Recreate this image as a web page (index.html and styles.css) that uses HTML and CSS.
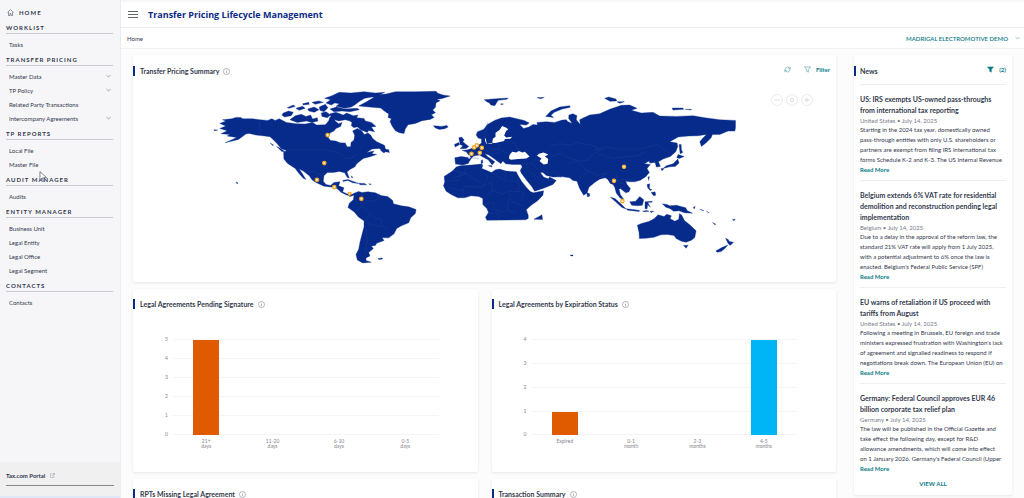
FILE: index.html
```html
<!DOCTYPE html>
<html lang="en">
<head>
    <meta charset="UTF-8">
    <meta name="viewport" content="width=device-width, initial-scale=1.0">
    <title>Transfer Pricing Lifecycle Management</title>
    <link rel="stylesheet" href="styles.css">
</head>
<body>
    <svg class="defs" aria-hidden="true">
        <symbol id="info" viewBox="0 0 16 16"><circle cx="8" cy="8" r="7"/><path d="M8 7v5M8 4v1.500"/></symbol>
        <symbol id="chevron" viewBox="0 0 12 8"><path d="M1 1.500l5 5 5-5"/></symbol>
        <symbol id="funnel" viewBox="0 0 16 16"><path d="M1 2h14L10 8v6l-4-2V8z"/></symbol>
    </svg>
    <div class="app">
        <aside class="sidebar">
            <nav>
                <a href="#" class="home">
                    <svg viewBox="0 0 14 14"><path d="M1 7l6-6 6 6M3 6v7h3V9h2v4h3V6"/></svg>
                    HOME
                </a>
                <h2>WORKLIST</h2>
                <ul>
                    <li><a href="#">Tasks</a></li>
                </ul>
                <h2>TRANSFER PRICING</h2>
                <ul>
                    <li><a href="#">Master Data</a><svg class="chevron"><use href="#chevron"/></svg></li>
                    <li><a href="#">TP Policy</a><svg class="chevron"><use href="#chevron"/></svg></li>
                    <li><a href="#">Related Party Transactions</a></li>
                    <li><a href="#">Intercompany Agreements</a><svg class="chevron"><use href="#chevron"/></svg></li>
                </ul>
                <h2>TP REPORTS</h2>
                <ul>
                    <li><a href="#">Local File</a></li>
                    <li><a href="#">Master File</a></li>
                </ul>
                <h2>AUDIT MANAGER</h2>
                <ul>
                    <li><a href="#">Audits</a></li>
                </ul>
                <h2>ENTITY MANAGER</h2>
                <ul>
                    <li><a href="#">Business Unit</a></li>
                    <li><a href="#">Legal Entity</a></li>
                    <li><a href="#">Legal Office</a></li>
                    <li><a href="#">Legal Segment</a></li>
                </ul>
                <h2>CONTACTS</h2>
                <ul>
                    <li><a href="#">Contacts</a></li>
                </ul>
            </nav>
            <div class="portal">
                <a href="#">Tax.com Portal
                    <svg viewBox="0 0 12 12"><path d="M6 2H1v9h8V6M5 7l6-6M7 1h4v4"/></svg>
                </a>
            </div>
        </aside>

        <div class="page">
            <header class="topbar">
                <button class="menu" aria-label="Menu"><span></span><span></span><span></span></button>
                <h1>Transfer Pricing Lifecycle Management</h1>
            </header>
            <div class="crumbs">
                <a href="#">Home</a>
                <button class="company">MADRIGAL ELECTROMOTIVE DEMO <svg class="chevron"><use href="#chevron"/></svg></button>
            </div>

            <main class="content">
                <div class="dashboard">
                    <section class="card summary">
                        <div class="card-head">
                            <h3>Transfer Pricing Summary</h3>
                            <svg class="info"><use href="#info"/></svg>
                            <div class="tools">
                                <button aria-label="Refresh"><svg viewBox="0 0 16 16"><path d="M2 9a6 6 0 0 1 10-5l2 2M14 2v4h-4M14 7a6 6 0 0 1-10 5l-2-2M2 14v-4h4"/></svg></button>
                                <button class="filter"><svg><use href="#funnel"/></svg>Filter</button>
                            </div>
                        </div>
                        <div class="map">
                            <svg class="world" viewBox="-198 0 2106 555">
                                <g class="land">
                                    <!-- North America -->
                                    <path d="M62 115L80 108 70 104 98 101 110 97 125 97 130 101 160 101 182 104 205 106 218 101 228 106 240 101 262 112 290 116 318 117 340 112 352 120 378 119 388 108 392 96 402 98 408 108 418 116 428 112 424 124 410 130 404 138 392 144 387 158 394 166 410 168 422 173 438 174 443 185 454 185 455 172 464 165 466 150 460 138 474 130 486 136 495 148 506 144 514 150 520 160 532 170 550 178 556 184 540 190 518 192 502 202 524 198 518 206 532 208 512 215 492 220 472 236 467 245 452 253 443 261 450 279 444 277 436 263 420 259 402 262 384 262 374 272 372 288 380 298 394 301 404 292 422 290 418 302 434 308 430 320 442 326 462 328 455 333 440 329 425 321 414 311 400 306 374 303 350 292 338 284 330 272 312 258 300 252 308 264 320 283 312 279 298 264 288 250 265 235 254 222 253 202 262 196 246 191 234 176 220 162 212 155 190 152 170 150 150 145 140 147 118 163 78 173 100 163 112 157 84 153 92 148 66 146 84 137 62 130 80 123z"/>
                                    <path d="M213 174l10 6-3 1zM232 184l8 4 18 12-10-1z"/>
                                    <path d="M458 112l12-8 10 8-2 12-14 4-8-6z"/>
                                    <path d="M540 188l10-10 6 4 2 10 10 2 2 8-12-2-4 4-8-6z"/>
                                    <!-- Arctic islands -->
                                    <path d="M252 84l16-6 14 4-6 10-20 4-8-6zM272 104l16-12 18-4 14 6 14-4 6 12 14-4 2 10-18 4-16-4-14 2-14 2zM264 68l18-8 6 4-18 6zM290 70l20-6 8 6-18 6zM310 56l18-4 2 6-18 2zM325 72l20-6 14 8-14 8-16-4zM338 52l20-4 14 4-24 6zM360 66l18-8 8 10-12 12-12-4zM366 84l14-4 14 10-10 8-16-4z"/>
                                    <path d="M392 72l20-6 24 6 38-2 6 4-28 6-24-2-24 2zM380 54l14-10-18-4 22-8 22-10 34 2 40-4 34 4 28-2-24 12-36 6-14 8-16 12-10 6-20 4-26-6 10-8-14-2-10 6z"/>
                                    <path d="M392 86l18-4 22 8 10-6 20 8 14-2-4 8 22 2 4 8 18 4 14 12-14 2 10 14-18-4-4 6-20-8-16-14-16-12-14-4-20 4-22-8z"/>
                                    <!-- Greenland and Iceland -->
                                    <path d="M478 63l22-12 24-14-14-6 50-4 28-7 60 0 62-1 4 5 16 6 22 3-26 8-14 2 10 4-12 6-2 14-8 8 8 8-12 6 8 8-12 6-24 4-20 8-22 4-8 12-4 14-14-2-12-6-10-14-6-14 4-8-10-4 2-10-12-8-12-10-26-2z"/>
                                    <path d="M702 122l12 1 12 1 16-3 4 5-10 5-16 2-12-4z"/>
                                    <!-- Caribbean -->
                                    <path d="M430 286l16-3 22 8 10 4-18-2-14-7-14 3zM478 294l18 1 6 4-20 0zM508 296l8 1-3 2zM456 272l4 4-2 3z"/>
                                    <!-- South America -->
                                    <path d="M450 334L464 324 478 319 488 322 506 320 528 323 545 331 565 334 580 346 582 356 606 362 628 365 650 373 648 385 634 398 628 413 606 422 592 430 584 446 568 458 548 458 554 466 532 474 528 481 516 482 522 490 508 502 512 512 500 518 500 526 516 531 490 533 474 524 470 508 478 492 482 470 488 448 494 425 494 407 478 396 464 380 446 367 450 354 462 344 464 330z"/>
                                    <path d="M536 520l12-2 2 3-12 2zM110 291l5 1 1 4-3-1zM44 134l12 1-10 2z"/>
                                </g>
                                <g class="land" transform="translate(600 0)">
                                    <!-- Europe and Asia -->
                                    <path d="M166 218L185 214 205 217 208 210 200 200 188 196 205 194 222 188 238 180 246 174 246 162 236 159 230 150 234 140 252 133 264 118 285 106 305 99 330 96 352 101 374 106 389 114 380 120 360 118 372 130 388 126 400 118 414 120 412 112 440 110 465 112 488 105 500 104 505 110 518 115 507 100 508 90 520 86 532 92 530 104 542 118 540 104 552 98 570 90 600 86 630 73 665 61 690 60 712 70 695 76 725 84 760 82 780 93 830 94 880 92 915 98 960 104 1007 106 1007 128 1005 138 985 138 960 148 938 148 934 158 920 172 905 184 900 170 910 158 920 148 895 152 865 153 835 156 810 170 832 174 834 184 828 200 812 214 790 222 776 230 782 244 770 246 766 232 750 234 748 228 734 236 752 238 742 250 749 262 738 275 722 285 705 290 690 290 678 288 682 298 692 310 688 320 678 323 662 310 658 312 662 328 672 342 662 339 650 324 645 306 640 298 632 295 624 282 616 278 600 282 585 292 568 306 562 324 552 330 540 310 532 288 520 286 510 278 490 275 460 276 440 271 430 262 422 262 432 276 446 281 450 276 470 286 460 298 430 310 405 318 397 305 380 284 365 264 362 256 368 245 364 238 340 238 318 236 310 228 304 236 296 230 280 218 268 210 256 205 264 214 286 230 278 240 266 224 250 216 240 210 222 213 214 222 206 235 190 240 168 237z"/>
                                    <!-- Africa -->
                                    <path d="M160 257L170 246 182 242 215 240 245 237 250 240 247 250 262 256 276 262 288 254 300 252 320 258 350 260 356 272 366 288 380 306 392 319 402 323 432 317 430 330 415 346 395 360 380 374 386 390 386 400 378 404 262 405 258 396 267 382 262 370 250 358 250 340 238 334 215 332 195 338 175 338 155 328 140 318 132 302 136 290 134 274z"/>
                                    <path d="M403 402l14-7 10-6 2 14zM178 158l8-2 8 8-4 6 10 8 8 6-8 6-18 1 8-9-8-4zM165 178l12-6 4 6-14 8zM245 226l4-2 1 10-5 2zM266 242l10-1 2 5zM512 509h8v3h-6z"/>
                                    <path d="M254 44l24-2 48-3-4 4-26 3-4 6-6 10-12-2-4-6-8-4zM304 56l8 1-8 2zM412 38l22-1-10 4zM438 94l16-16 26-12 30-4 2 5-24 5-24 10-10 9 8 6z"/>
                                    <path d="M615 40l12-4 22 6 2 6-20 1zM652 50l22 0-14 5zM817 69l32 0 3 4-32 2zM856 73l18 0 1 2zM838 178l6 0 1 16 4 8-8 4z"/>
                                    <!-- Pacific islands -->
                                    <path d="M835 208l18 6-14 6-8-2zM834 222l4 12-12 10-16 1-20 5 10-8 20-6zM784 250l7 0-1 5-4 1zM745 276l4-2-2 12zM562 323l8 3 0 7-7 2zM742 298l8-2-1 14 8 4-6 2-7-8zM754 322l12-2 2 10-6 2z"/>
                                    <path d="M632 336l14 4 20 18 14 14-14-6-18-16zM680 371l20 2 20 3-2 3-34-4zM690 350l18-2 12-14 12 10-4 16-14 2-18-2zM736 350l22-2-2 3-12 1 8 14-8-7-2 12h-6zM788 356l14 2 8 4 20-2 28 8 4 8 16 8-24-1-16-6-16 1-12-8-12-4zM728 378l12-2 8 2-12 2zM752 378l10 0-8 5zM880 368l6-5-2 8z"/>
                                    <path d="M900 372l12 4-2 1zM920 378l8 5-3-1zM938 412l10 5-3 2zM998 404l8-3-4 6z"/>
                                    <!-- Australia and New Zealand -->
                                    <path d="M713 420l12-5 22-6 16-8 12-12 18 5 8-7 14 5-4 8 14 8 12-6 2-17 7 5 8 16 16 13 19 18-4 20-10 8-16 6-14-3-16-8-6-9-20-3-20 1-20 7-24 3-20 1-1-18zM851 481l14-1-6 9zM977 459l8 4 4 6 12 2-10 10-6-6zM984 479l-8 10-12 10-12 2-4-4 18-10z"/>
                                </g>
                                <g class="sea" transform="translate(600 0)">
                                    <path d="M308 123l-8 12-12 8 0 12-8 6-2 14-18 1-4-12 2-6 4 18 10-2 16 0 26-6 2-6 16-1 6-6-18 2-6-6 6-14 6-4-4-4z"/>
                                    <path d="M330 210l8-10 12 2 8-4 10 4 8-2 14 14-10 6-24 2-22 2-6-4zM418 206l14-4 14 6-10 6 10 8-2 14-12 2-12-10 6-8-14-8zM204 212l6-2 4 8-6 4z"/>
                                </g>
                                <g class="borders">
                                    <path d="M182 104v47M262 195h120l28 6 18 6 8 14 20-2 20-12M316 258l30 2 20 12M488 325l4 18 22 6 24-8M470 376l20-12 22 20-12 18 8 14M512 384l14 16 20 4 2 16 18 14M508 416l22 6 20 4M500 424l4 40-6 40M536 342l4-18"/>
                                    <g transform="translate(600 0)">
                                        <path d="M160 256l40 10-38 12M200 240l-2 24 46 32M244 238l-2 20 20 10 2 14M318 258v30h44M276 262l42 26M262 284l-16 22-50-2-6 12M150 308l40 8 2 20M140 288l36-2 10-20M246 306l30-16 2 26M278 316l-22 20M278 316l30 10 20-8 32 2M328 340l-6 34 24 10M250 354h32l4 20 30 6M352 286l10 20-10 18M328 322l10 28 34 12M372 322l-6 24M264 384h34v20"/>
                                        <path d="M264 112l-10 50M330 100l-2 38M254 176l20 18 26-2 16 10M300 176l-4 20M316 168l30 6 6 18 20 8M208 218l30 2M258 196l16 12 24-6M368 238l30-4 12-14M380 236l6 22 34 22M398 234l20 22M420 250l30 14 14-4 20 18M452 214l30-10 22 12 34 14M450 184l28-8 38 4 14-8 46 8 22 10M504 236l30-8 26-2M560 228l24-24 26-12M580 196l44-10 30 6 64 0 30-8M596 206l44 14 70-8 30-12M748 186l22-8 28 16 12 14M540 230l24 30-30 24M564 256l28 14 32-6M606 278l10-12M648 266l10 26 18 6M664 284l28-2"/>
                                    </g>
                                </g>
                                <g class="pins">
                                    <circle cx="385" cy="150" r="5"/><circle cx="375" cy="234" r="5"/><circle cx="353" cy="284" r="5"/><circle cx="405" cy="306" r="5"/><circle cx="451" cy="326" r="4"/><circle cx="486" cy="341" r="5"/>
                                    <circle cx="824" cy="187" r="5"/><circle cx="832" cy="181" r="5"/><circle cx="847" cy="188" r="5"/><circle cx="816" cy="206" r="5"/><circle cx="841" cy="203" r="5"/>
                                    <circle cx="1273" cy="245" r="5"/><circle cx="1243" cy="287" r="5"/><circle cx="1268" cy="348" r="5"/>
                                </g>
                            </svg>
                            <div class="map-zoom">
                                <button aria-label="Zoom out"><svg viewBox="0 0 12 12"><path d="M3 6h6"/></svg></button>
                                <button aria-label="Reset zoom"><svg viewBox="0 0 12 12"><circle cx="6" cy="6" r="2"/></svg></button>
                                <button aria-label="Zoom in"><svg viewBox="0 0 12 12"><path d="M3 6h6M6 3v6"/></svg></button>
                            </div>
                        </div>
                    </section>

                    <section class="card chart-card">
                        <div class="card-head">
                            <h3>Legal Agreements Pending Signature</h3>
                            <svg class="info"><use href="#info"/></svg>
                        </div>
                        <div class="chart">
                            <div class="axis"><span>5</span><span>4</span><span>3</span><span>2</span><span>1</span><span>0</span></div>
                            <div class="plot">
                                <div class="lines"><i></i><i></i><i></i><i></i><i></i></div>
                                <div class="bars">
                                    <div><b class="orange" style="height: 100%"></b></div>
                                    <div></div>
                                    <div></div>
                                    <div></div>
                                </div>
                            </div>
                            <div class="labels"><span>21+<br>days</span><span>11-20<br>days</span><span>6-10<br>days</span><span>0-5<br>days</span></div>
                        </div>
                    </section>

                    <section class="card chart-card">
                        <div class="card-head">
                            <h3>Legal Agreements by Expiration Status</h3>
                            <svg class="info"><use href="#info"/></svg>
                        </div>
                        <div class="chart">
                            <div class="axis"><span>4</span><span>3</span><span>2</span><span>1</span><span>0</span></div>
                            <div class="plot">
                                <div class="lines"><i></i><i></i><i></i><i></i></div>
                                <div class="bars">
                                    <div><b class="orange" style="height: 25%"></b></div>
                                    <div></div>
                                    <div></div>
                                    <div><b class="blue" style="height: 100%"></b></div>
                                </div>
                            </div>
                            <div class="labels"><span>Expired</span><span>0-1<br>month</span><span>2-3<br>months</span><span>4-5<br>months</span></div>
                        </div>
                    </section>

                    <section class="card chart-card">
                        <div class="card-head">
                            <h3>RPTs Missing Legal Agreement</h3>
                            <svg class="info"><use href="#info"/></svg>
                        </div>
                    </section>
                    <section class="card chart-card">
                        <div class="card-head">
                            <h3>Transaction Summary</h3>
                            <svg class="info"><use href="#info"/></svg>
                        </div>
                    </section>
                </div>

                <section class="card news">
                    <div class="card-head">
                        <h3>News</h3>
                        <div class="tools">
                            <button class="news-filter"><svg><use href="#funnel"/></svg>(2)</button>
                        </div>
                    </div>
                    <article>
                        <h4>US: IRS exempts US-owned pass-throughs<br>from international tax reporting</h4>
                        <small>United States • July 14, 2025</small>
                        <p>Starting in the 2024 tax year, domestically owned<br>pass-through entities with only U.S. shareholders or<br>partners are exempt from filing IRS international tax<br>forms Schedule K-2 and K-3. The US Internal Revenue</p>
                        <a href="#">Read More</a>
                    </article>
                    <article>
                        <h4>Belgium extends 6% VAT rate for residential<br>demolition and reconstruction pending legal<br>implementation</h4>
                        <small>Belgium • July 14, 2025</small>
                        <p>Due to a delay in the approval of the reform law, the<br>standard 21% VAT rate will apply from 1 July 2025,<br>with a potential adjustment to 6% once the law is<br>enacted. Belgium's Federal Public Service (SPF)</p>
                        <a href="#">Read More</a>
                    </article>
                    <article>
                        <h4>EU warns of retaliation if US proceed with<br>tariffs from August</h4>
                        <small>United States • July 14, 2025</small>
                        <p>Following a meeting in Brussels, EU foreign and trade<br>ministers expressed frustration with Washington's lack<br>of agreement and signalled readiness to respond if<br>negotiations break down. The European Union (EU) on</p>
                        <a href="#">Read More</a>
                    </article>
                    <article>
                        <h4>Germany: Federal Council approves EUR 46<br>billion corporate tax relief plan</h4>
                        <small>Germany • July 14, 2025</small>
                        <p>The law will be published in the Official Gazette and<br>take effect the following day, except for R&amp;D<br>allowance amendments, which will come into effect<br>on 1 January 2026. Germany's Federal Council (Upper</p>
                        <a href="#">Read More</a>
                    </article>
                    <a href="#" class="view-all">VIEW ALL</a>
                </section>
            </main>
        </div>
    </div>
    <svg class="pointer" viewBox="0 0 12 18"><path d="M1 1v14l4-4 2 6 2-1-2-5h5z"/></svg>
</body>
</html>
```
FILE: styles.css
```css
* {
    box-sizing: border-box;
}
body {
    margin: 0;
    font-family: Lato, "Noto Sans", sans-serif;
    font-size: 6px;
    color: #33394d;
    background: #fcfcfc;
}
h1, h2, h3, h4, p, ul {
    margin: 0;
    padding: 0;
}
ul {
    list-style: none;
}
a {
    color: inherit;
    text-decoration: none;
}
button {
    display: flex;
    align-items: center;
    padding: 0;
    border: none;
    background: none;
    font: inherit;
    color: inherit;
    cursor: pointer;
}
svg {
    display: block;
    fill: none;
    stroke: currentColor;
}
.defs {
    position: absolute;
    width: 0;
    height: 0;
}
.app {
    display: flex;
    height: 100vh;
    overflow: hidden;
}

/* sidebar */
.sidebar {
    display: flex;
    flex-direction: column;
    justify-content: space-between;
    flex: 0 0 121px;
    background: #f6f6f9;
    border-right: 1px solid #ececef;
}
.sidebar nav {
    padding: 6px 7px 0 6px;
}
.home {
    display: flex;
    align-items: center;
    gap: 5px;
    height: 12px;
    padding-left: 1px;
    margin-bottom: 4px;
    font-size: 6px;
    font-weight: bold;
    letter-spacing: 1px;
}
.home svg {
    width: 7px;
    height: 7px;
}
.sidebar h2 {
    height: 12px;
    line-height: 12px;
    border-bottom: 1px solid #c9cad2;
    font-size: 6px;
    font-weight: bold;
    letter-spacing: 1px;
}
.sidebar ul {
    padding: 3px 2px 3px 3px;
}
.sidebar li {
    display: flex;
    align-items: center;
    justify-content: space-between;
    height: 14px;
}
.chevron {
    width: 5px;
    height: 4px;
    overflow: visible;
}
.portal {
    height: 36px;
    padding: 3px 6px 0;
    background: #f0f0f1;
    border-bottom: 2px solid #dfe8f6;
}
.portal a {
    display: flex;
    align-items: center;
    gap: 5px;
    height: 21px;
    border-bottom: 1px solid #85858c;
    font-weight: bold;
}
.portal svg {
    width: 5px;
    height: 5px;
    opacity: 0.6;
}

/* header */
.page {
    flex: 1;
    min-width: 0;
}
.topbar {
    display: flex;
    align-items: center;
    gap: 10px;
    height: 28px;
    padding-left: 7px;
    background: #fff;
    border-top: 2px solid #f7f7f7;
    border-bottom: 1px solid #efefef;
}
.menu {
    flex-direction: column;
    gap: 2px;
    width: 10px;
}
.menu span {
    width: 10px;
    height: 1px;
    background: #62656f;
}
h1 {
    font-family: "Open Sans", "Noto Sans", sans-serif;
    font-size: 9px;
    font-weight: bold;
    color: #0b2a86;
}
.crumbs {
    display: flex;
    align-items: center;
    justify-content: space-between;
    height: 21px;
    padding: 0 4px 0 6px;
    background: #fff;
    border-bottom: 1px solid #f2f2f2;
}
.company {
    gap: 7px;
    font-weight: 600;
    color: #0b7b86;
}

/* cards */
.content {
    display: flex;
    align-items: flex-start;
    gap: 18px;
    padding: 6px 12px 0 12px;
}
.dashboard {
    flex: 1;
    display: grid;
    grid-template-columns: 1fr 1fr;
    gap: 7px 14px;
}
.card {
    background: #fff;
    border-radius: 2px;
    box-shadow: 0 1px 3px rgba(0, 0, 0, 0.09);
}
.card-head {
    display: flex;
    align-items: center;
    gap: 4px;
    height: 10px;
    margin-top: 9px;
    padding: 0 6px 0 5px;
    border-left: 2px solid #0b2a86;
}
h3 {
    font-size: 7px;
    line-height: 10px;
    font-weight: bold;
}
.info {
    width: 7px;
    height: 7px;
    opacity: 0.8;
}
.tools {
    display: flex;
    gap: 13px;
    margin-left: auto;
    padding-bottom: 3px;
    color: #0b7b86;
}
.tools svg {
    width: 7px;
    height: 7px;
}
.filter,
.news-filter {
    gap: 5px;
    font-weight: bold;
}
.news-filter svg {
    fill: currentColor;
}
.summary {
    grid-column: 1 / -1;
    padding: 2px 0 12px;
}
.map {
    position: relative;
    margin-top: 9px;
}
.world {
    width: 100%;
}
.land {
    fill: #062b8b;
    stroke: #062b8b;
    stroke-width: 1;
}
.sea {
    fill: #fff;
    stroke: none;
}
.borders {
    stroke: #284697;
    stroke-width: 1;
}
.pins {
    fill: #fff;
    stroke: #f9a61c;
    stroke-width: 4;
}
.map-zoom {
    position: absolute;
    top: 9px;
    right: 23px;
    display: flex;
    gap: 3px;
    color: #d5d5d5;
}
.map-zoom button {
    width: 12px;
    height: 12px;
    border: 1px solid #ececec;
    border-radius: 50%;
}

/* charts */
.chart-card {
    height: 183px;
    padding-top: 1px;
}
.chart {
    display: grid;
    grid-template-columns: 5px 1fr;
    gap: 4px;
    margin: 30px 39px 0 31px;
    font-size: 5px;
    line-height: 5px;
    color: #85858c;
}
.axis {
    display: flex;
    flex-direction: column;
    justify-content: space-between;
    margin: -2px 0;
    text-align: center;
}
.plot {
    position: relative;
    height: 96px;
    border-top: 1px solid #f4f4f4;
}
.lines {
    display: flex;
    flex-direction: column;
    height: 100%;
}
.lines i {
    flex: 1;
    border-bottom: 1px solid #f4f4f4;
}
.bars {
    position: absolute;
    inset: 0;
    display: flex;
}
.bars div {
    flex: 1;
    display: flex;
    justify-content: center;
    align-items: flex-end;
}
.bars b {
    width: 26px;
}
.orange {
    background: #e05a00;
}
.blue {
    background: #00b5f5;
}
.labels {
    grid-column: 2;
    display: flex;
}
.labels span {
    flex: 1;
    text-align: center;
}

/* news */
.news {
    flex: 0 0 158px;
    padding: 2px 6px 7px 0;
}
.news .card-head {
    padding-right: 0;
    padding-left: 4px;
}
article {
    margin-left: 6px;
    padding: 9px 0 6px;
    border-top: 1px solid #efeff2;
    white-space: nowrap;
}
.card-head + article {
    margin-top: 8px;
}
h4 {
    font-size: 7px;
    line-height: 11px;
    font-weight: bold;
}
small {
    display: block;
    font-size: 6px;
    line-height: 9px;
    color: #777b88;
}
article p {
    line-height: 10px;
}
article a {
    display: block;
    line-height: 9px;
    font-weight: bold;
    color: #0b7b86;
}
.view-all {
    display: block;
    margin-left: 6px;
    line-height: 9px;
    text-align: center;
    font-weight: bold;
    color: #0b7b86;
}

.pointer {
    position: absolute;
    top: 171px;
    left: 39px;
    width: 8px;
    height: 11px;
    fill: #fff;
}
```
